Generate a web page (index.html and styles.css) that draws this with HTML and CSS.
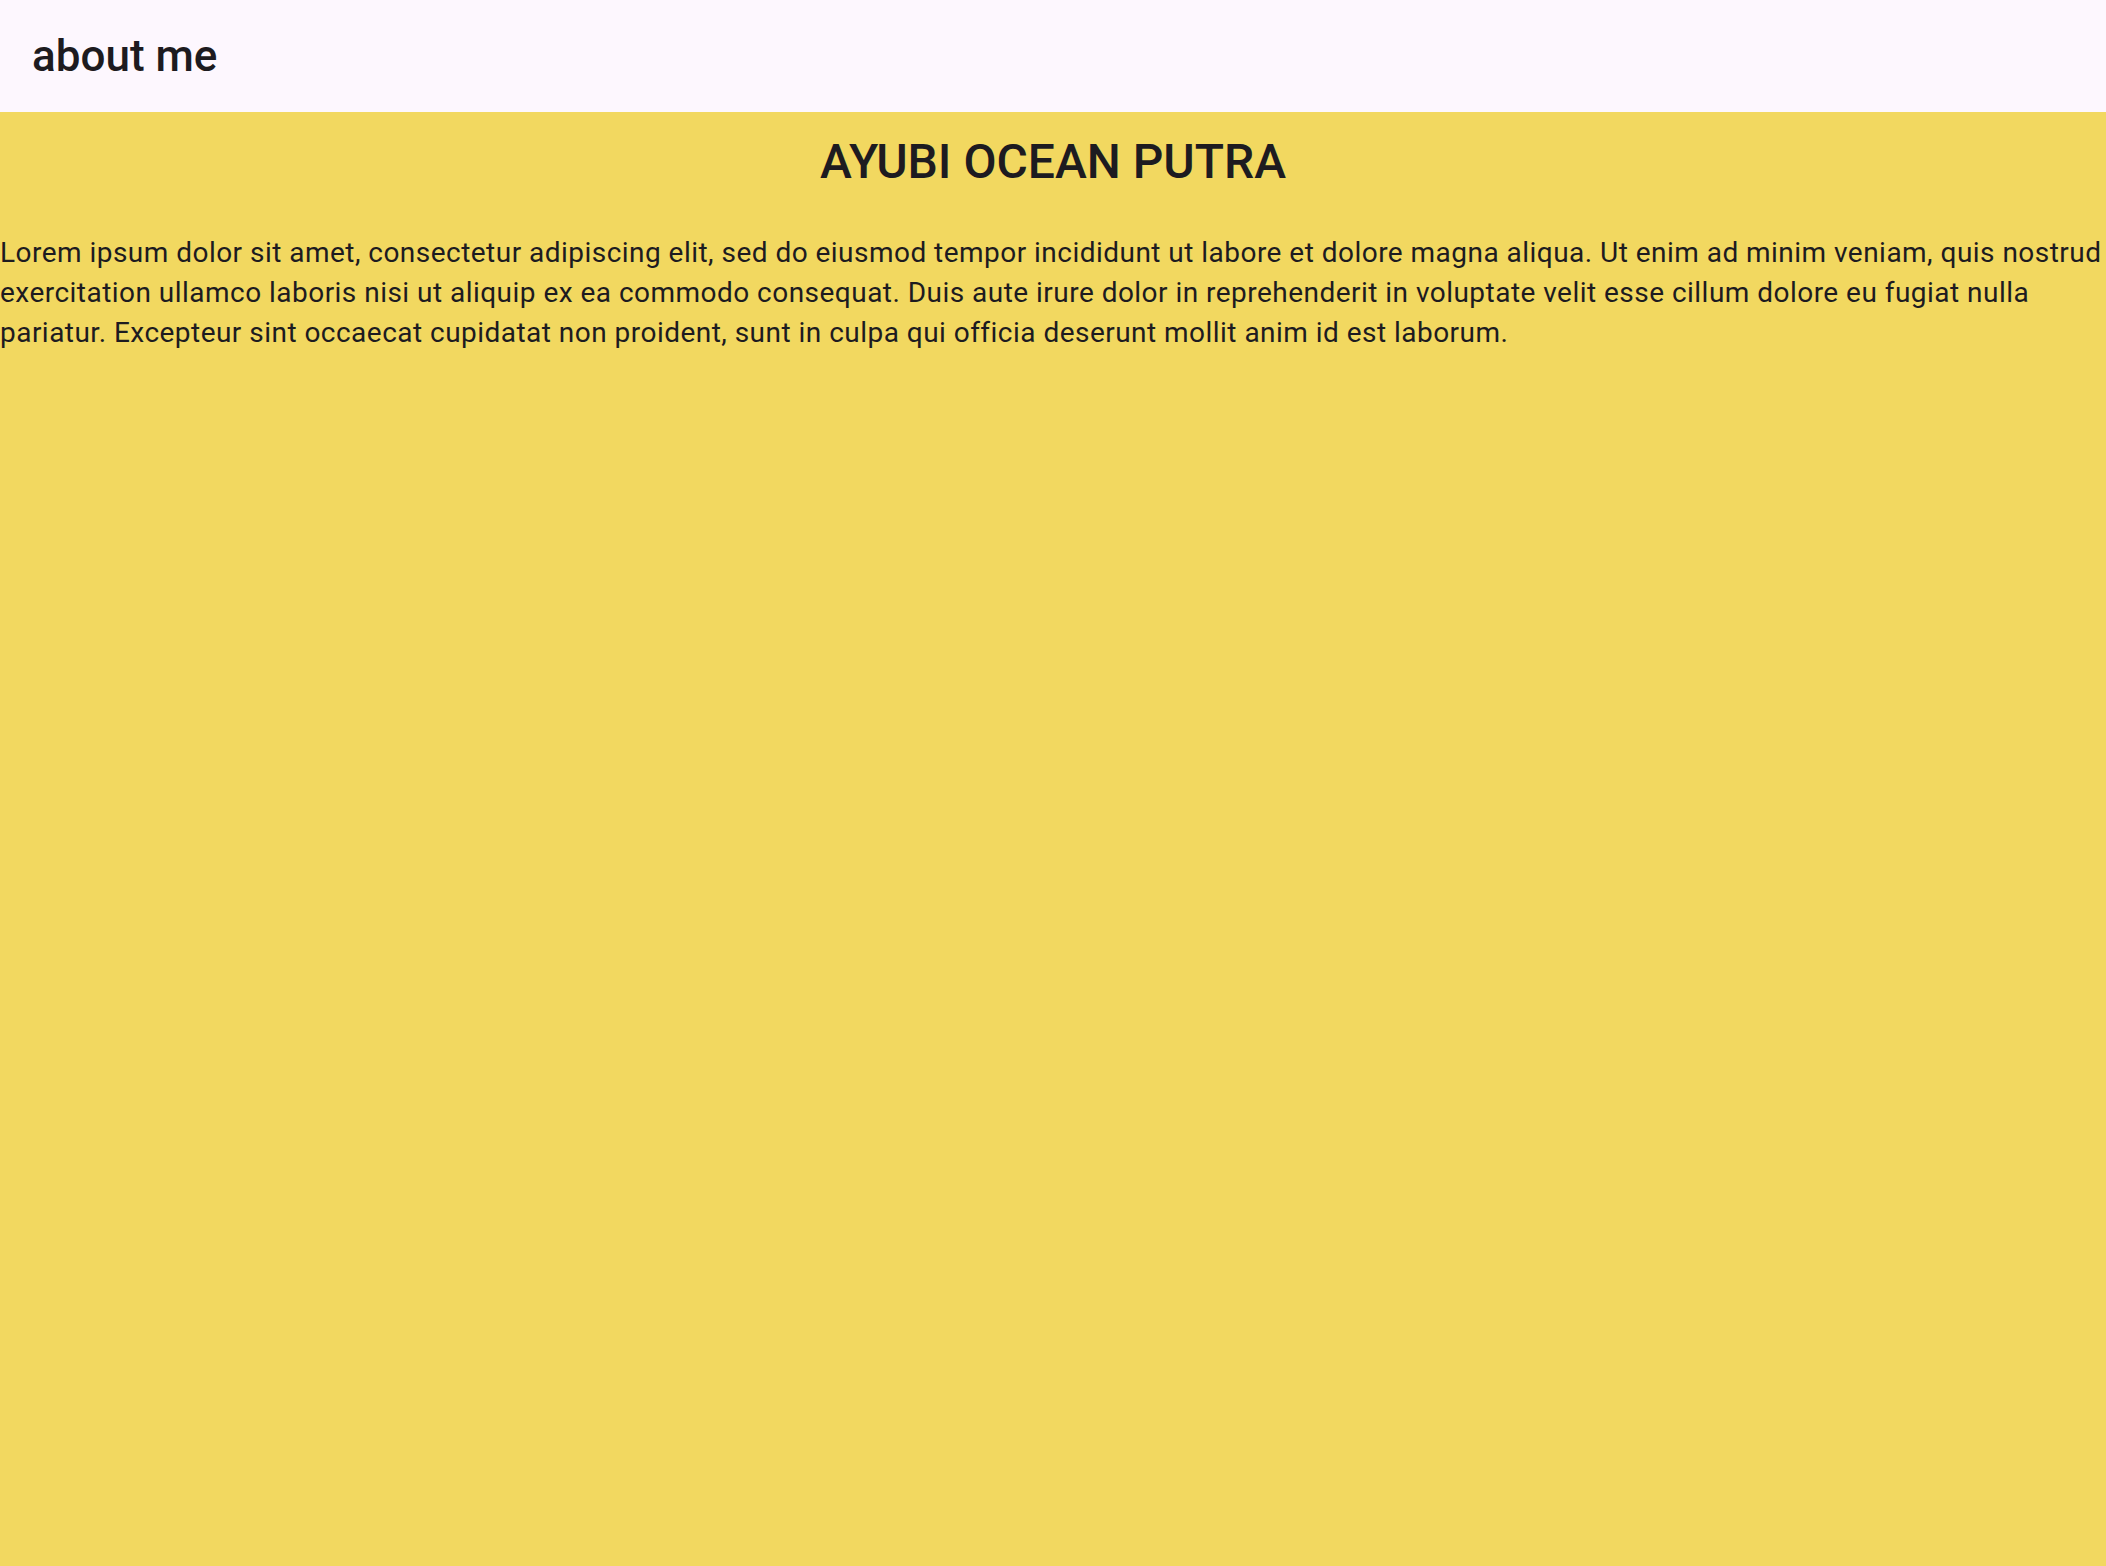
FILE: index.html
```html
<!DOCTYPE html>
<html>
<head>
<meta charset="utf-8">
<link rel="stylesheet" href="styles.css">
</head>
<body>
<header class="appbar"><h1 class="appbar-title">about me</h1></header>
<main class="content">
<h2 class="name">AYUBI OCEAN PUTRA</h2>
<p class="bio">Lorem ipsum dolor sit amet, consectetur adipiscing elit, sed do eiusmod tempor incididunt ut labore et dolore magna aliqua. Ut enim ad minim veniam, quis nostrud exercitation ullamco laboris nisi ut aliquip ex ea commodo consequat. Duis aute irure dolor in reprehenderit in voluptate velit esse cillum dolore eu fugiat nulla pariatur. Excepteur sint occaecat cupidatat non proident, sunt in culpa qui officia deserunt mollit anim id est laborum.</p>
</main>
</body>
</html>
```
FILE: styles.css
```css
html, body {
  margin: 0;
  padding: 0;
  height: 100%;
}
body {
  font-family: Roboto, "Liberation Sans", sans-serif;
  color: #1d1b20;
  background: #f2d860;
  display: flex;
  flex-direction: column;
  overflow: hidden;
}
.appbar {
  height: 112px;
  flex: none;
  background: #fdf7fe;
  display: flex;
  align-items: center;
  padding-left: 32px;
}
.appbar-title {
  margin: 0;
  font-size: 44px;
  font-weight: 500;
  line-height: 56px;
}
.content {
  flex: 1;
  background: #f2d860;
}
.name {
  margin: 18px 0 0;
  text-align: center;
  font-size: 48px;
  font-weight: 500;
  line-height: 64px;
}
.bio {
  margin: 39px 0 0;
  font-size: 28px;
  line-height: 40px;
  letter-spacing: 0.47px;
}
```
